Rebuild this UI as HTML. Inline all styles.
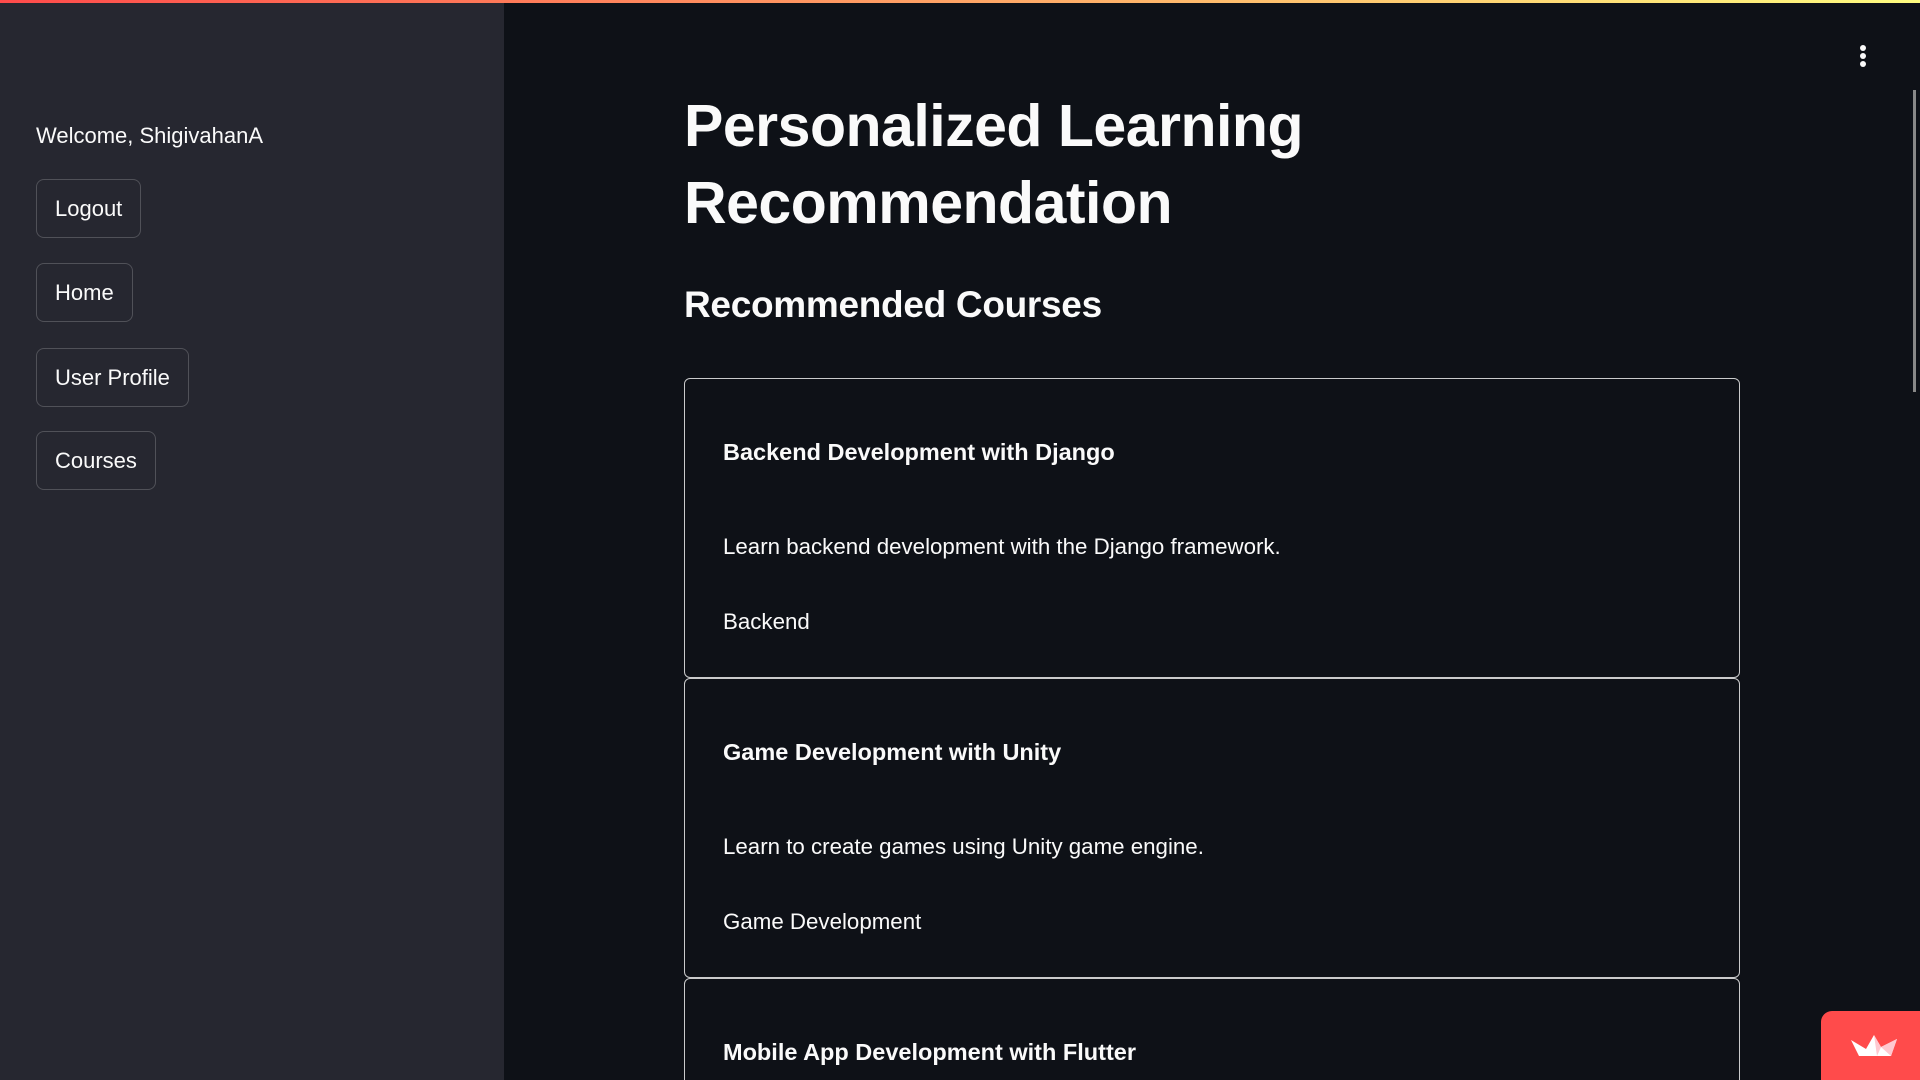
<!DOCTYPE html>
<html style="width:1920px;height:1080px;overflow:hidden"><head><meta charset="utf-8"><style>
*{margin:0;padding:0;box-sizing:border-box}
body{width:1920px;height:1080px;overflow:hidden;background:#0e1117;color:#fafafa;font-family:"Liberation Sans",sans-serif;position:relative}
.top{position:absolute;left:0;top:0;width:1920px;height:3px;background:linear-gradient(90deg,#ff4b4b,#fffd80);z-index:5}
.side{position:absolute;left:0;top:0;width:504px;height:1080px;background:#262730}
.welcome{position:absolute;left:36px;top:123px;font-size:22px}
.btn{position:absolute;left:36px;height:59px;border:1px solid rgba(250,250,250,0.2);border-radius:8px;font-size:22px;line-height:57px;padding:0 18px;background:#262730}
h1{position:absolute;left:684px;top:88px;font-size:59px;line-height:77px;font-weight:700;letter-spacing:-0.5px}
h2{position:absolute;left:684px;top:284px;font-size:37px;font-weight:700;letter-spacing:-0.3px}
.card{position:absolute;left:684px;width:1056px;border:1px solid rgba(250,250,250,0.8);border-radius:6px}
.card .t{position:absolute;left:38px;font-size:23.5px;font-weight:700}
.card .d{position:absolute;left:38px;font-size:22.3px}
.kebab{position:absolute;left:1860px;top:45px;width:6px}
.kebab i{display:block;width:6px;height:6px;border-radius:50%;background:#fafafa;margin-bottom:2px}
.sb{position:absolute;left:1913px;top:90px;width:3px;height:302px;background:#888}
.badge{position:absolute;left:1821px;top:1011px;width:99px;height:69px;background:#ff4b4b;border-top-left-radius:11px}
</style></head><body>
<div class="top"></div>
<div class="side">
<div class="welcome">Welcome, ShigivahanA</div>
<div class="btn" style="top:179px">Logout</div>
<div class="btn" style="top:263px">Home</div>
<div class="btn" style="top:348px">User Profile</div>
<div class="btn" style="top:431px">Courses</div>
</div>
<h1>Personalized Learning<br>Recommendation</h1>
<h2>Recommended Courses</h2>
<div class="card" style="top:378px;height:300px">
<div class="t" style="top:60px">Backend Development with Django</div>
<div class="d" style="top:155px">Learn backend development with the Django framework.</div>
<div class="d" style="top:230px">Backend</div>
</div>
<div class="card" style="top:678px;height:300px">
<div class="t" style="top:60px">Game Development with Unity</div>
<div class="d" style="top:155px">Learn to create games using Unity game engine.</div>
<div class="d" style="top:230px">Game Development</div>
</div>
<div class="card" style="top:978px;height:120px">
<div class="t" style="top:60px">Mobile App Development with Flutter</div>
</div>
<div class="kebab"><i></i><i></i><i></i></div>
<div class="sb"></div>
<div class="badge"><svg width="99" height="69" viewBox="0 0 99 69"><path d="M30 29 L45 38 L53 24 L60 36 L76 28 L70 45 L38 45 Z" fill="#fff"/><path d="M53 24 L60 36 L56 45 Z M60 36 L76 28 L70 45 Z" fill="#ffc9d0"/></svg></div>
</body></html>
